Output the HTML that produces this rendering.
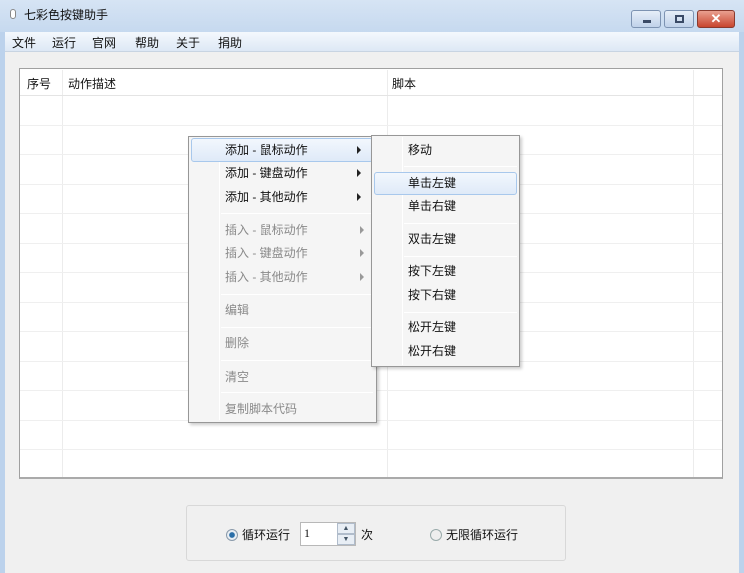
<!DOCTYPE html>
<html><head><meta charset="utf-8"><style>
*{margin:0;padding:0;box-sizing:border-box}
body{width:744px;height:573px;overflow:hidden;background:#f0f0f0;font-family:"Liberation Sans","Noto Sans CJK SC",sans-serif;font-size:12px;color:#111;position:relative}
.abs{position:absolute}
.t{position:absolute;white-space:nowrap;line-height:14px}
.hl{position:absolute;border:1px solid #a8c8ec;border-radius:3px;background:linear-gradient(#f2f7fd,#dfeaf8)}
.sep{position:absolute;height:1px;background:#e0e0e0;border-bottom:1px solid #fff}
.g{color:#8a8a8a}
.arr{position:absolute;width:0;height:0;border-left:4px solid #222;border-top:4px solid transparent;border-bottom:4px solid transparent}
.arr.g2{border-left-color:#999}
</style></head><body>
<div class="abs" style="left:0;top:0;width:744px;height:32px;background:linear-gradient(#d6e4f4,#c6d9ef)"></div>
<div class="abs" style="left:0;top:32px;width:5px;height:541px;background:#bcd2ec"></div>
<div class="abs" style="left:739px;top:32px;width:5px;height:541px;background:#bcd2ec"></div>
<div class="abs" style="left:5px;top:32px;width:734px;height:20px;background:linear-gradient(#f4f8fd,#dde8f5);border-bottom:1px solid #c8d4e2"></div>
<div class="abs" style="left:10px;top:9px;width:6px;height:10px;border:1px solid #888;border-radius:3px;background:#fff"></div>
<div class="t" style="left:24px;top:8px">七彩色按键助手</div>
<div class="abs" style="left:631px;top:10px;width:30px;height:18px;border:1px solid #7d93b2;border-radius:3px;background:linear-gradient(#e6eef8,#c0d2ea)"><div class="abs" style="left:11px;top:9px;width:8px;height:3px;background:#3a4a66"></div></div>
<div class="abs" style="left:664px;top:10px;width:30px;height:18px;border:1px solid #7d93b2;border-radius:3px;background:linear-gradient(#e6eef8,#c0d2ea)"><div class="abs" style="left:10px;top:4px;width:9px;height:8px;border:2px solid #3a4a66"></div></div>
<div class="abs" style="left:697px;top:10px;width:38px;height:18px;border:1px solid #8a3a2e;border-radius:3px;background:linear-gradient(#e9a090,#c8452e);color:#fff;font-weight:bold;font-size:13px;text-align:center;line-height:16px">✕</div>
<div class="t" style="left:12px;top:36px">文件</div><div class="t" style="left:52px;top:36px">运行</div><div class="t" style="left:92px;top:36px">官网</div><div class="t" style="left:135px;top:36px">帮助</div><div class="t" style="left:176px;top:36px">关于</div><div class="t" style="left:218px;top:36px">捐助</div>
<!-- list -->
<div class="abs" style="left:19px;top:68px;width:704px;height:411px;background:#fff;border:1px solid #a0a0a0;border-bottom:2px solid #aaa"></div>
<div class="abs" style="left:62px;top:70px;width:1px;height:407px;background:#ececec"></div>
<div class="abs" style="left:387px;top:70px;width:1px;height:407px;background:#ececec"></div>
<div class="abs" style="left:693px;top:70px;width:1px;height:407px;background:#ececec"></div>
<div class="abs" style="left:20px;top:95px;width:702px;height:1px;background:#e4e4e4"></div>
<div id="rows"></div>
<div class="t" style="left:27px;top:77px">序号</div><div class="t" style="left:68px;top:77px">动作描述</div><div class="t" style="left:392px;top:77px">脚本</div>
<!-- menu -->
<div class="abs" style="left:188px;top:136px;width:189px;height:287px;background:#f5f5f5;border:1px solid #979797;box-shadow:2px 2px 3px rgba(0,0,0,.2)"></div>
<div class="abs" style="left:219px;top:138px;width:1px;height:282px;background:#e2e2e2;border-right:1px solid #fff"></div>
<div class="hl" style="left:191px;top:138px;width:182px;height:24px"></div>
<div class="t" style="left:225px;top:143px">添加 - 鼠标动作</div><div class="arr" style="left:357px;top:146px"></div>
<div class="t" style="left:225px;top:166px">添加 - 键盘动作</div><div class="arr" style="left:357px;top:169px"></div>
<div class="t" style="left:225px;top:190px">添加 - 其他动作</div><div class="arr" style="left:357px;top:193px"></div>
<div class="sep" style="left:221px;top:213px;width:152px"></div>
<div class="t g" style="left:225px;top:223px">插入 - 鼠标动作</div><div class="arr g2" style="left:360px;top:226px"></div>
<div class="t g" style="left:225px;top:246px">插入 - 键盘动作</div><div class="arr g2" style="left:360px;top:249px"></div>
<div class="t g" style="left:225px;top:270px">插入 - 其他动作</div><div class="arr g2" style="left:360px;top:273px"></div>
<div class="sep" style="left:221px;top:294px;width:152px"></div>
<div class="t g" style="left:225px;top:303px">编辑</div>
<div class="sep" style="left:221px;top:327px;width:152px"></div>
<div class="t g" style="left:225px;top:336px">删除</div>
<div class="sep" style="left:221px;top:360px;width:152px"></div>
<div class="t g" style="left:225px;top:370px">清空</div>
<div class="sep" style="left:221px;top:392px;width:152px"></div>
<div class="t g" style="left:225px;top:402px">复制脚本代码</div>
<!-- submenu -->
<div class="abs" style="left:371px;top:135px;width:149px;height:232px;background:#f5f5f5;border:1px solid #979797;box-shadow:2px 2px 3px rgba(0,0,0,.2)"></div>
<div class="abs" style="left:402px;top:137px;width:1px;height:228px;background:#e2e2e2;border-right:1px solid #fff"></div>
<div class="t" style="left:408px;top:143px">移动</div>
<div class="sep" style="left:404px;top:166px;width:113px"></div>
<div class="hl" style="left:374px;top:172px;width:143px;height:23px"></div>
<div class="t" style="left:408px;top:176px">单击左键</div>
<div class="t" style="left:408px;top:199px">单击右键</div>
<div class="sep" style="left:404px;top:223px;width:113px"></div>
<div class="t" style="left:408px;top:232px">双击左键</div>
<div class="sep" style="left:404px;top:256px;width:113px"></div>
<div class="t" style="left:408px;top:264px">按下左键</div>
<div class="t" style="left:408px;top:288px">按下右键</div>
<div class="sep" style="left:404px;top:312px;width:113px"></div>
<div class="t" style="left:408px;top:320px">松开左键</div>
<div class="t" style="left:408px;top:344px">松开右键</div>
<!-- bottom -->
<div class="abs" style="left:186px;top:505px;width:380px;height:56px;border:1px solid #d8d8d8;border-radius:3px"></div>
<div class="abs" style="left:226px;top:529px;width:12px;height:12px;border-radius:50%;border:1px solid #8a9aaa;background:radial-gradient(#2a6ea8 35%,#e8eef4 45%)"></div>
<div class="t" style="left:242px;top:528px">循环运行</div>
<div class="abs" style="left:300px;top:522px;width:56px;height:24px;background:#fff;border:1px solid #b8b8b8"></div>
<div class="t" style="left:304px;top:526px;font-family:'Liberation Serif',serif">1</div>
<div class="abs" style="left:337px;top:523px;width:18px;height:11px;border:1px solid #b0bccb;background:#e8eef5;font-size:7px;text-align:center;line-height:9px;color:#456">▲</div>
<div class="abs" style="left:337px;top:534px;width:18px;height:11px;border:1px solid #b0bccb;background:#e8eef5;font-size:7px;text-align:center;line-height:9px;color:#456">▼</div>
<div class="t" style="left:361px;top:528px">次</div>
<div class="abs" style="left:430px;top:529px;width:12px;height:12px;border-radius:50%;border:1px solid #9aa;background:#eee"></div>
<div class="t" style="left:446px;top:528px">无限循环运行</div>
<script>
var r=document.getElementById('rows'),h='';
[125,154,184,213,243,272,302,331,361,390,420,449].forEach(function(y){h+='<div class="abs" style="left:20px;top:'+y+'px;width:702px;height:1px;background:#efefef"></div>'});
r.innerHTML=h;
</script>
</body></html>
